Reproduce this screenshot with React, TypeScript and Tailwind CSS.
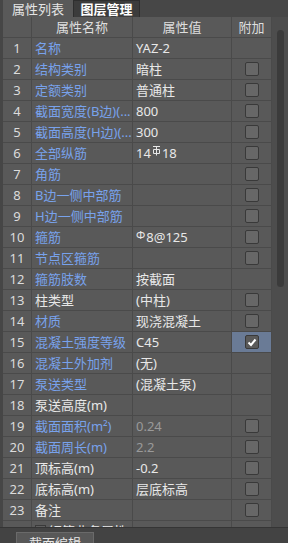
import React from 'react';

type Row = {
  name: string;
  value: React.ReactNode;
  blue?: boolean;
  dim?: boolean;
  box?: 'off' | 'on';
};

const Hrb = () => (
  <svg width="9" height="11" viewBox="0 0 9 11" className="inline-block -mt-[6px] mx-[1px]">
    <path d="M1 1.5H8M4.5 1.5V10.5M1.5 4.5H7.5V8.5H1.5Z" stroke="#e6e6e6" strokeWidth="1" fill="none" />
  </svg>
);

const rows: Row[] = [
  { name: '名称', value: 'YAZ-2', blue: true },
  { name: '结构类别', value: '暗柱', blue: true, box: 'off' },
  { name: '定额类别', value: '普通柱', blue: true, box: 'off' },
  { name: '截面宽度(B边)(...', value: '800', blue: true, box: 'off' },
  { name: '截面高度(H边)(...', value: '300', blue: true, box: 'off' },
  { name: '全部纵筋', value: <>14<Hrb />18</>, blue: true, box: 'off' },
  { name: '角筋', value: '', blue: true, box: 'off' },
  { name: 'B边一侧中部筋', value: '', blue: true, box: 'off' },
  { name: 'H边一侧中部筋', value: '', blue: true, box: 'off' },
  { name: '箍筋', value: <><span className="text-[11px] relative -top-[3px] mr-[1px]">Φ</span>8@125</>, blue: true, box: 'off' },
  { name: '节点区箍筋', value: '', blue: true, box: 'off' },
  { name: '箍筋肢数', value: '按截面', blue: true },
  { name: '柱类型', value: '(中柱)', box: 'off' },
  { name: '材质', value: '现浇混凝土', blue: true, box: 'off' },
  { name: '混凝土强度等级', value: 'C45', blue: true, box: 'on' },
  { name: '混凝土外加剂', value: '(无)', blue: true },
  { name: '泵送类型', value: '(混凝土泵)', blue: true },
  { name: '泵送高度(m)', value: '' },
  { name: '截面面积(m²)', value: '0.24', blue: true, dim: true, box: 'off' },
  { name: '截面周长(m)', value: '2.2', blue: true, dim: true, box: 'off' },
  { name: '顶标高(m)', value: '-0.2', box: 'off' },
  { name: '底标高(m)', value: '层底标高', box: 'off' },
  { name: '备注', value: '', box: 'off' },
];

const Box = ({ on }: { on?: boolean }) => (
  <div className={`w-[14px] h-[14px] rounded-[2px] border border-[#393939] flex items-center justify-center ${on ? 'bg-[#5a5a5a]' : 'bg-[#676767]'}`}>
    {on && (
      <svg width="10" height="9" viewBox="0 0 10 9">
        <path d="M1.5 4.5L4 7L8.5 1.5" stroke="#ffffff" strokeWidth="2" fill="none" />
      </svg>
    )}
  </div>
);

export default function App() {
  return (
    <div
      className="w-[288px] h-[543px] bg-[#474747] flex flex-col overflow-hidden text-[13px] leading-none"
      style={{ fontFamily: '"Noto Sans", "Noto Sans CJK SC", sans-serif' }}
    >
      {/* tabs */}
      <div className="h-[17px] flex items-stretch shrink-0">
        <div className="w-[3px] bg-[#464646]" />
        <div className="w-[70px] bg-[#595959] text-[#e4e4e4] flex items-center justify-center pt-[1px]">属性列表</div>
        <div className="w-[67px] bg-[#3c3c3c] border border-b-0 border-[#2e2e2e] text-white font-bold flex items-center justify-center">图层管理</div>
        <div className="flex-1" />
      </div>

      {/* table + scrollbar */}
      <div className="h-[510px] flex shrink-0 overflow-hidden">
        <div className="w-[3px] bg-[#464646]" />
        <div className="w-[269px] bg-[#595959] flex flex-col">
          <div className="h-[21px] flex border-b border-[#4a4a4a] text-[#dedede] shrink-0">
            <div className="w-[29px] border-r border-[#4a4a4a]" />
            <div className="w-[101px] border-r border-[#4a4a4a] flex items-center justify-center">属性名称</div>
            <div className="w-[99px] border-r border-[#4a4a4a] flex items-center justify-center">属性值</div>
            <div className="w-[40px] border-r border-[#4a4a4a] flex items-center justify-center">附加</div>
          </div>
          {rows.map((r, i) => (
            <div key={i} className="h-[21px] flex border-b border-[#4a4a4a] shrink-0">
              <div className="w-[29px] border-r border-[#4a4a4a] flex items-center justify-center text-[#dcdcdc]">{i + 1}</div>
              <div className={`w-[101px] border-r border-[#4a4a4a] flex items-center pl-[3px] whitespace-nowrap overflow-hidden ${r.blue ? 'text-[#78a2ec]' : 'text-[#e8e8e8]'}`}>
                {r.name}
              </div>
              <div className={`w-[99px] border-r border-[#4a4a4a] flex items-center pl-[3px] whitespace-nowrap ${r.dim ? 'text-[#9a9a9a]' : 'text-[#e8e8e8]'}`}>
                {r.value}
              </div>
              <div className={`w-[40px] border-r border-[#4a4a4a] flex items-center justify-center ${r.box === 'on' ? 'bg-[#6a7b96]' : ''}`}>
                {r.box && <Box on={r.box === 'on'} />}
              </div>
            </div>
          ))}
          <div className="h-[21px] flex shrink-0">
            <div className="w-[29px] border-r border-[#4a4a4a]" />
            <div className="w-[101px] border-r border-[#4a4a4a] flex items-start pl-[3px] pt-[4px] gap-[3px] text-[#e8e8e8]">
              <div className="w-[11px] h-[11px] border border-[#3a3a3a] bg-[#5e5e5e]" />
              <span>钢筋业务属性</span>
            </div>
            <div className="w-[99px] border-r border-[#4a4a4a]" />
            <div className="w-[40px] border-r border-[#4a4a4a]" />
          </div>
        </div>
        <div className="w-[16px] bg-[#4d4d4d] flex justify-center pt-[13px]">
          <div className="w-[7px] h-[257px] rounded-full bg-[#3b3b3b]" />
        </div>
      </div>

      {/* bottom */}
      <div className="flex-1 bg-[#434343] border-t border-[#353535] pt-[4px] pl-[16px]">
        <div className="w-[78px] h-[20px] bg-[#585858] border border-[#6a6a6a] text-[#e8e8e8] flex items-start justify-center pt-[4px]">截面编辑</div>
      </div>
    </div>
  );
}
